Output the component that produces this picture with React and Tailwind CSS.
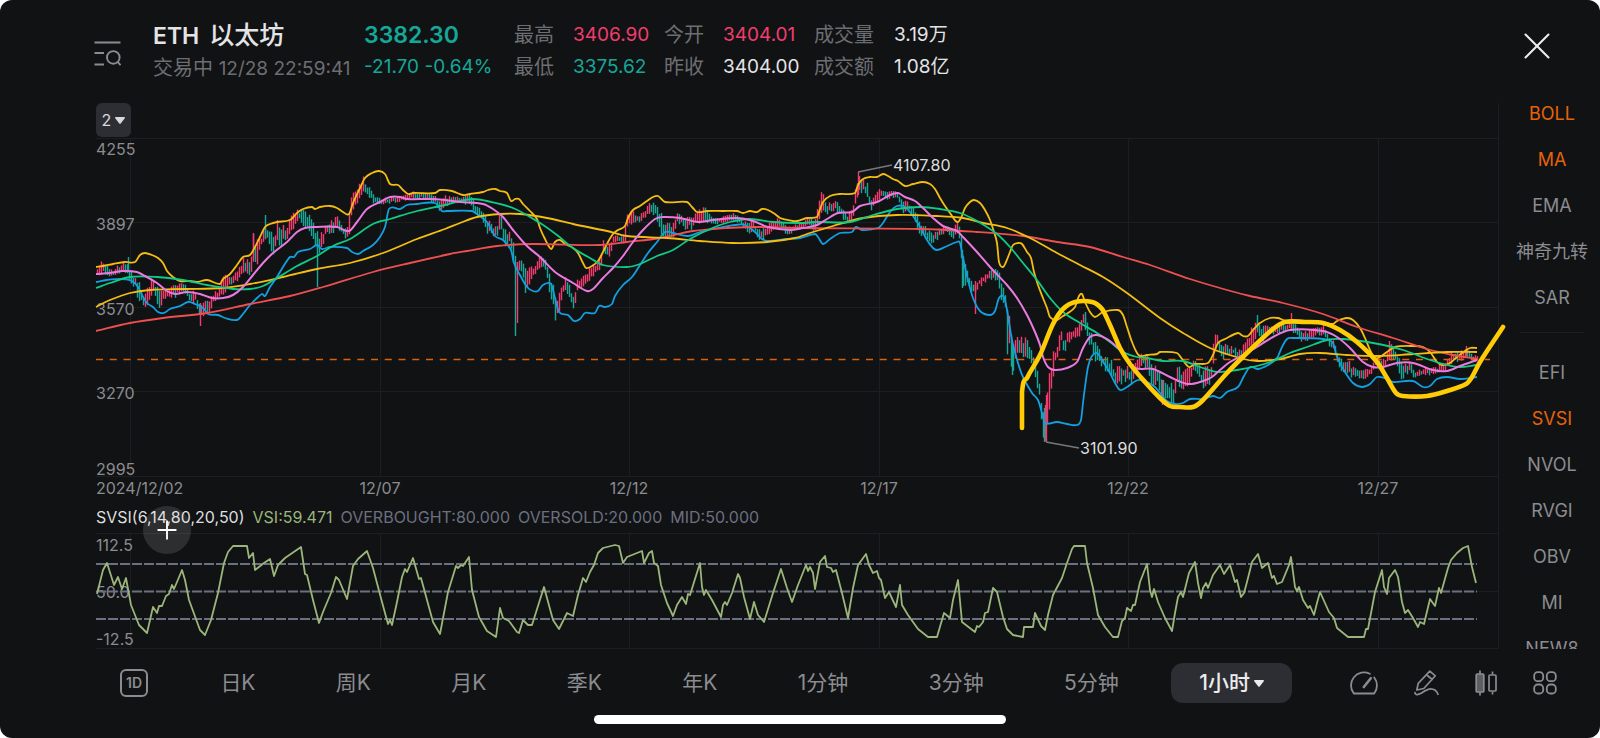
import { Plus, X } from "lucide-react";

const UP = "#f23c6e";
const DOWN = "#14a898";

const quotes = [
  [
    { label: "最高", value: "3406.90", color: "text-[#f23c6e]" },
    { label: "今开", value: "3404.01", color: "text-[#f23c6e]" },
    { label: "成交量", value: "3.19万", color: "text-[#e4e4e6]" },
  ],
  [
    { label: "最低", value: "3375.62", color: "text-[#14a898]" },
    { label: "昨收", value: "3404.00", color: "text-[#e4e4e6]" },
    { label: "成交额", value: "1.08亿", color: "text-[#e4e4e6]" },
  ],
];

const mainIndicators = ["BOLL", "MA", "EMA", "神奇九转", "SAR"];
const subIndicators = ["EFI", "SVSI", "NVOL", "RVGI", "OBV", "MI", "NEW8"];
const activeIndicators = ["BOLL", "MA", "SVSI"];

const periods = ["日K", "周K", "月K", "季K", "年K", "1分钟", "3分钟", "5分钟"];

const gridX = [130, 380, 629, 879, 1128, 1378];
const gridY = [138, 222, 307, 391, 476];
const priceLabels = [
  ["4255", 155],
  ["3897", 230],
  ["3570", 315],
  ["3270", 399],
  ["2995", 475],
];
const dateLabels = ["12/07", "12/12", "12/17", "12/22", "12/27"];

// x, y pairs
const bollUpper =
  "96,267 103,266 113,264 125,262 135,262 140,255 145,253 152,255 158,258 163,263 167,271 173,277 180,281 190,281 197,282 207,280 220,284 223,279 230,274 237,265 243,257 250,255 255,247 260,237 265,227 270,224 277,222 290,220 297,213 303,209 312,207 315,209 320,207 330,206 337,208 343,212 349,214 353,203 360,188 365,178 372,173 379,171 385,174 390,184 398,185 403,190 408,194 413,193 435,193 440,190 452,191 463,195 470,194 483,192 488,190 495,189 500,191 507,193 511,201 515,199 519,199 523,204 530,211 537,219 540,228 544,237 551,249 555,242 560,240 565,244 573,248 578,253 583,263 586,268 592,266 598,261 603,252 608,242 613,234 618,230 625,226 628,218 633,210 640,206 647,201 653,197 658,196 665,202 687,202 692,207 697,212 707,211 723,211 737,211 743,213 750,211 757,212 762,209 768,210 775,214 780,218 793,221 797,221 807,218 817,217 819,212 823,202 830,196 840,194 855,193 858,185 863,179 870,177 877,177 883,174 888,176 893,179 898,181 905,186 913,184 923,182 930,184 935,189 940,198 945,206 950,213 957,222 961,218 965,208 970,202 974,200 980,203 985,210 990,220 994,232 997,243 999,262 1003,267 1006,262 1010,252 1013,245 1018,243 1022,244 1027,252 1031,258 1034,272 1038,285 1043,298 1047,308 1050,317 1057,320 1063,316 1068,313 1075,307 1079,296 1082,294 1085,302 1090,312 1095,317 1103,312 1118,310 1123,315 1127,327 1132,342 1137,353 1140,356 1147,355 1157,354 1160,352 1177,353 1182,359 1189,367 1195,364 1208,363 1213,355 1218,343 1225,339 1238,333 1243,336 1248,336 1253,330 1260,323 1270,318 1278,318 1283,320 1290,321 1322,322 1333,324 1337,321 1347,318 1353,320 1360,328 1365,338 1370,350 1375,358 1380,357 1387,352 1395,347 1413,346 1423,347 1430,352 1437,362 1442,365 1450,363 1457,357 1465,351 1470,348 1477,348";

const bollLower =
  "96,282 107,280 123,279 132,281 138,287 142,295 147,303 153,307 158,312 164,313 170,309 180,306 188,302 195,304 203,308 208,314 218,315 225,318 237,320 243,314 250,305 257,298 262,294 265,296 270,287 277,277 283,267 290,257 294,257 298,252 310,249 317,245 322,249 330,247 347,248 352,252 358,254 363,251 373,245 380,237 385,227 389,209 400,209 407,205 417,204 435,203 442,211 447,211 472,211 478,215 487,222 495,236 503,240 511,250 514,263 520,275 527,287 533,291 538,291 543,285 551,284 555,298 559,312 568,315 574,321 580,319 585,313 595,313 599,306 605,307 612,304 615,296 623,285 632,277 640,265 648,253 657,242 665,232 673,233 688,236 700,232 723,227 735,225 745,225 755,232 762,239 768,241 787,239 800,238 815,234 818,237 823,244 830,239 840,233 852,232 856,227 862,230 878,228 883,223 890,212 897,206 905,207 913,216 920,227 927,240 933,248 937,250 945,247 957,242 960,243 963,258 968,280 973,298 980,311 990,315 995,311 999,298 1004,297 1007,310 1012,340 1018,363 1023,377 1032,393 1038,400 1042,413 1045,423 1057,422 1067,424 1077,425 1081,420 1083,403 1085,387 1088,367 1092,356 1097,353 1102,360 1110,373 1115,383 1120,390 1127,387 1138,380 1147,382 1155,387 1160,393 1167,401 1175,404 1183,403 1190,399 1203,399 1213,396 1220,398 1227,392 1238,387 1244,376 1250,367 1258,369 1268,365 1277,358 1282,347 1287,339 1292,338 1323,339 1333,343 1337,357 1345,372 1353,383 1362,387 1370,384 1377,377 1387,379 1393,382 1413,381 1423,387 1430,386 1437,379 1447,377 1460,379 1477,377";

const ma20 =
  "96,274 110,273 123,271 137,272 145,276 157,283 167,291 175,294 187,292 200,294 212,298 223,298 233,295 243,287 253,275 263,263 273,253 287,242 297,232 305,228 317,227 337,227 349,231 357,222 367,209 380,202 390,197 400,197 407,199 430,199 445,200 460,202 483,204 493,209 503,217 513,230 527,246 540,257 555,272 573,283 587,291 593,289 603,278 613,268 623,256 633,242 643,230 655,219 663,217 680,218 698,222 713,220 737,218 753,221 768,227 790,230 803,228 817,225 827,219 838,213 852,212 860,206 877,202 890,195 898,193 905,197 915,201 923,208 933,218 943,226 957,231 963,237 977,252 990,267 1007,285 1017,298 1027,315 1035,332 1040,345 1043,357 1048,367 1055,370 1067,368 1077,362 1083,348 1090,337 1097,335 1107,339 1118,348 1127,358 1135,368 1153,369 1170,377 1188,384 1203,381 1212,377 1220,370 1230,362 1243,355 1257,347 1273,337 1290,330 1323,331 1337,337 1350,348 1363,362 1373,367 1383,367 1397,363 1413,363 1433,370 1447,371 1460,366 1477,360";

const ma60 =
  "96,288 110,283 130,277 157,277 183,280 207,285 233,289 250,289 263,286 277,278 297,266 317,256 333,246 350,239 373,224 390,219 417,211 445,205 460,201 473,199 487,201 513,208 540,223 557,235 573,248 590,258 603,265 627,267 640,264 657,256 673,250 690,239 710,229 730,222 750,219 773,222 800,223 817,222 850,222 873,215 897,209 920,207 940,209 960,213 977,221 997,234 1010,247 1023,263 1037,280 1050,298 1063,312 1080,323 1097,333 1110,342 1123,352 1137,357 1147,358 1163,361 1183,361 1200,367 1217,372 1237,370 1257,366 1273,361 1290,353 1307,347 1327,340 1343,339 1373,343 1403,350 1427,359 1447,365 1460,367 1477,365";

const ma120 =
  "96,307 110,300 130,293 150,290 183,289 223,288 250,284 283,277 317,269 350,263 383,253 417,239 445,229 460,223 477,217 500,214 520,214 547,218 573,224 607,231 627,236 667,238 700,241 733,243 767,242 795,238 810,233 833,226 863,218 897,215 937,216 963,218 983,223 1007,228 1030,238 1057,253 1080,265 1103,277 1127,293 1160,318 1183,333 1210,348 1240,358 1257,361 1280,359 1300,354 1320,353 1347,355 1380,356 1413,354 1447,352 1477,352";

const ma250 =
  "96,331 130,323 163,318 207,313 250,304 290,296 323,287 373,272 410,263 450,254 467,251 497,246 533,244 600,245 627,242 660,238 693,231 727,228 760,227 800,228 923,229 977,232 1023,236 1057,242 1090,247 1123,257 1150,265 1190,279 1227,290 1250,296 1283,303 1323,314 1357,327 1393,338 1427,349 1453,355 1477,359";

const sketch =
  "1022,428 1022,392 1027,378 1040,355 1053,324 1063,309 1075,302 1092,302 1102,309 1110,325 1120,348 1130,364 1145,382 1160,398 1170,406 1180,407 1193,407 1202,401 1227,373 1250,350 1273,329 1285,322 1305,322 1323,323 1340,330 1357,342 1377,362 1387,378 1396,393 1403,396 1427,396 1447,391 1466,384 1472,377 1480,362 1503,327";

const svsi =
  "97,594 103,570 107,563 114,585 118,577 122,589 126,578 131,605 139,625 147,633 153,607 157,613 159,606 162,606 166,596 169,594 172,585 174,589 177,582 182,570 185,580 189,600 200,630 205,635 211,620 218,593 224,563 228,552 233,546 247,546 249,558 253,553 255,570 264,563 270,559 274,576 278,565 285,558 301,547 305,574 307,575 313,600 319,623 323,612 331,593 336,577 339,580 347,599 353,566 358,559 367,551 373,568 382,602 388,624 390,620 392,625 397,602 402,577 405,569 407,572 413,558 419,579 421,578 433,622 440,634 448,592 456,566 458,568 461,565 463,566 469,557 472,590 479,617 487,631 496,637 500,608 503,618 509,621 517,632 519,633 523,620 528,625 532,625 538,606 544,587 553,620 559,629 567,613 573,616 578,595 583,578 586,582 590,572 594,565 598,553 603,548 615,545 619,546 623,563 627,557 642,551 644,563 649,553 652,551 654,563 658,566 661,585 667,603 673,616 677,605 682,597 686,604 688,594 690,595 700,563 702,587 704,595 706,590 712,600 721,617 723,605 725,602 727,605 732,593 738,574 740,578 744,597 750,619 754,602 758,615 764,622 773,593 781,569 787,588 792,602 798,585 806,565 808,571 810,567 813,573 815,589 817,578 820,562 825,556 827,567 831,568 833,572 836,570 842,593 848,618 853,588 858,565 866,554 869,565 873,573 877,571 879,578 881,580 885,598 889,592 896,607 900,585 902,605 908,615 918,629 928,637 937,637 944,613 950,618 953,600 958,580 962,622 975,632 977,626 979,627 983,622 985,613 988,612 993,588 997,592 1003,617 1007,629 1013,635 1023,637 1024,627 1033,627 1035,613 1041,626 1045,630 1048,615 1053,595 1062,578 1067,563 1072,549 1074,546 1085,546 1087,563 1093,588 1098,615 1105,627 1113,637 1118,637 1122,621 1125,618 1127,608 1131,611 1133,605 1135,605 1140,582 1147,564 1150,590 1152,597 1154,589 1158,602 1165,618 1172,631 1175,613 1178,597 1181,592 1183,597 1189,573 1195,562 1198,583 1201,598 1203,588 1206,583 1208,588 1213,575 1220,565 1224,574 1230,565 1235,582 1237,580 1241,597 1244,593 1247,582 1252,562 1258,554 1262,568 1268,563 1272,578 1274,576 1277,584 1282,582 1289,565 1291,557 1295,587 1297,591 1299,587 1303,600 1308,608 1310,606 1314,615 1317,603 1320,592 1329,612 1334,618 1337,628 1348,637 1364,637 1366,629 1368,629 1375,592 1382,570 1384,587 1387,594 1389,578 1395,570 1398,577 1402,602 1405,613 1408,610 1413,618 1418,627 1420,622 1424,624 1430,599 1435,606 1439,588 1441,593 1448,568 1451,560 1457,553 1463,548 1468,546 1472,567 1476,583";

// x, high, low
const priceRange =
  "96,268,277 103,261,272 107,265,274 113,270,277 120,264,272 127,262,272 130,272,285 135,276,285 138,280,302 143,298,306 148,288,306 153,277,295 157,285,311 161,290,305 165,290,299 175,285,296 183,282,291 188,292,300 195,292,303 199,303,315 204,300,315 208,303,314 213,293,305 218,290,297 223,272,295 226,274,292 230,278,285 237,270,282 243,260,275 250,262,274 253,238,262 256,240,265 260,237,250 265,226,238 270,230,247 274,240,255 277,222,245 282,225,243 287,228,240 290,215,233 297,211,220 303,209,225 307,215,228 312,220,238 317,233,250 322,235,253 325,225,235 331,220,233 337,218,228 342,227,236 348,228,240 350,200,225 352,190,210 355,190,205 360,182,195 363,178,190 367,185,195 372,192,202 377,197,205 385,198,204 392,197,203 400,196,201 405,194,200 413,192,198 425,193,199 435,197,203 440,203,214 445,197,207 450,197,203 460,196,204 469,195,203 475,203,215 482,210,220 487,220,232 493,227,237 497,225,235 500,212,227 504,230,245 510,232,243 513,245,265 517,262,278 520,252,272 526,272,293 531,268,280 537,260,270 543,255,265 548,268,282 552,275,310 555,295,318 558,300,321 561,285,300 565,278,290 570,287,300 574,297,310 577,280,290 582,278,286 587,272,285 593,265,275 600,258,268 603,242,255 608,245,258 613,235,245 620,235,242 625,228,245 628,210,225 633,213,222 640,215,222 645,210,218 650,201,213 655,203,215 660,210,230 663,220,238 668,225,237 673,222,235 677,212,222 685,217,228 692,217,228 697,212,222 702,207,225 708,212,222 717,219,224 727,215,221 735,213,220 742,220,227 748,223,235 753,220,228 758,230,240 765,227,238 772,222,230 780,218,227 787,227,237 793,225,230 800,223,230 808,218,225 815,220,232 818,200,220 822,192,207 827,203,214 835,202,210 842,207,217 848,215,225 853,203,218 856,180,207 858,175,195 862,178,190 867,185,200 871,200,210 876,190,200 882,190,198 890,190,199 898,192,200 902,197,216 907,201,210 913,207,217 917,215,234 922,223,236 927,230,240 933,235,245 938,228,237 945,225,232 952,230,240 957,222,233 960,222,250 963,250,285 967,272,283 971,282,293 975,283,295 978,278,287 985,274,282 992,268,278 998,270,282 1001,285,303 1005,292,305 1007,305,353 1010,318,358 1013,345,368 1016,337,350 1020,338,355 1025,336,360 1030,348,360 1034,360,373 1037,370,388 1040,390,405 1042,405,430 1044,425,441 1046,395,440 1049,375,405 1053,350,375 1058,340,355 1061,327,345 1064,340,355 1068,330,342 1074,330,338 1079,325,337 1083,314,327 1085,314,330 1088,325,340 1092,338,350 1097,347,365 1103,357,367 1110,360,375 1115,370,385 1120,365,382 1125,365,380 1130,370,383 1137,360,375 1141,352,365 1148,357,370 1150,362,383 1158,372,385 1162,378,400 1168,385,400 1173,385,403 1177,365,382 1183,372,392 1188,370,385 1194,360,370 1198,365,378 1202,372,391 1205,362,388 1210,370,385 1214,338,360 1217,336,345 1222,347,362 1227,345,355 1233,348,355 1240,350,360 1247,340,355 1252,322,345 1257,320,332 1262,327,342 1267,325,336 1275,325,333 1283,323,332 1291,322,330 1296,325,335 1303,332,342 1310,330,338 1317,328,335 1323,326,335 1329,338,346 1334,342,352 1338,355,367 1345,360,373 1352,365,378 1360,370,378 1368,370,378 1375,358,368 1380,358,368 1385,357,368 1389,345,360 1393,347,360 1398,352,370 1402,367,380 1408,362,372 1415,370,378 1425,368,376 1437,367,373 1445,362,370 1452,352,362 1460,352,360 1466,349,357 1472,354,361 1477,357,362";

// long wicks that stand out of the range
const wicks = [
  [128, 257, 272, DOWN],
  [200, 303, 326, UP],
  [265, 215, 238, DOWN],
  [253, 233, 258, UP],
  [317, 237, 287, DOWN],
  [515, 262, 336, DOWN],
  [517, 262, 323, UP],
  [858, 172, 195, UP],
  [975, 285, 314, UP],
  [962, 250, 288, DOWN],
  [1012, 345, 375, DOWN],
  [1044, 408, 442, DOWN],
  [1046, 395, 442, UP],
  [1085, 312, 330, DOWN],
  [1162, 380, 405, UP],
  [1257, 315, 330, DOWN],
  [1291, 313, 331, UP],
  [1389, 341, 360, UP],
  [1466, 346, 356, UP],
];

const parse = (text) => text.split(" ").map((p) => p.split(",").map(Number));

function smoothPath(text) {
  const pts = parse(text);
  let d = `M${pts[0][0]} ${pts[0][1]}`;
  for (let i = 0; i < pts.length - 1; i++) {
    const p0 = pts[i - 1] || pts[i];
    const p1 = pts[i];
    const p2 = pts[i + 1];
    const p3 = pts[i + 2] || p2;
    // one third of each step keeps the curve from overshooting in x
    const dx = (p2[0] - p1[0]) / 3;
    const s1 = (p2[1] - p0[1]) / (p2[0] - p0[0] || 1);
    const s2 = (p3[1] - p1[1]) / (p3[0] - p1[0] || 1);
    d += `C${p1[0] + dx} ${p1[1] + s1 * dx} ${p2[0] - dx} ${p2[1] - s2 * dx} ${p2[0]} ${p2[1]}`;
  }
  return d;
}

function buildCandles() {
  const range = parse(priceRange);
  const candles = [];
  let k = 0;
  let prevMid = 272;
  for (let x = 97; x <= 1477; x += 2) {
    while (k < range.length - 2 && range[k + 1][0] < x) k++;
    const [x0, h0, l0] = range[k];
    const [x1, h1, l1] = range[k + 1];
    const t = (x - x0) / (x1 - x0);
    const size = l0 + (l1 - l0) * t - (h0 + (h1 - h0) * t);
    const n1 = Math.abs(Math.sin(x * 12.9898) * 43758.5453) % 1;
    const n2 = Math.abs(Math.sin(x * 78.233) * 12543.123) % 1;
    const high = h0 + (h1 - h0) * t + (n1 - 0.35) * size * 0.5;
    const low = l0 + (l1 - l0) * t - (n2 - 0.35) * size * 0.5;
    const mid = (high + low) / 2;
    candles.push([x, high, low, mid <= prevMid ? UP : DOWN]);
    prevMid = mid;
  }
  return candles;
}

const candles = [...buildCandles(), ...wicks];

function PriceChart() {
  return (
    <svg
      viewBox="96 137 1402 363"
      className="relative block w-full overflow-visible"
      role="img"
      aria-label="ETH price chart"
    >
      <g stroke="#1d1e21">
        {gridY.map((y) => (
          <line key={y} x1="96" x2="1498" y1={y + 0.5} y2={y + 0.5} />
        ))}
        {gridX.map((x) => (
          <line key={x} x1={x + 0.5} x2={x + 0.5} y1="138" y2="476" />
        ))}
      </g>
      <g fill="#8b8c90" className="text-[16px]">
        {priceLabels.map(([label, y]) => (
          <text key={label} x="96" y={y}>
            {label}
          </text>
        ))}
        <text x="96" y="494">
          2024/12/02
        </text>
        {dateLabels.map((label, i) => (
          <text key={label} x={gridX[i + 1]} y="494" textAnchor="middle">
            {label}
          </text>
        ))}
      </g>
      <g strokeWidth="1.4">
        {candles.map(([x, high, low, color], i) => (
          <line key={i} x1={x + 0.5} x2={x + 0.5} y1={high} y2={low} stroke={color} />
        ))}
      </g>
      <line x1="96" x2="1490" y1="359.5" y2="359.5" stroke="#d9620f" strokeWidth="1.5" strokeDasharray="7 6.75" />
      <g fill="none" strokeWidth="1.8" strokeLinejoin="round">
        <path d={smoothPath(bollLower)} stroke="#139fe0" />
        <path d={smoothPath(bollUpper)} stroke="#f3bd12" />
        <path d={smoothPath(ma250)} stroke="#ee4f51" />
        <path d={smoothPath(ma120)} stroke="#f3bd12" />
        <path d={smoothPath(ma60)} stroke="#0fcb85" />
        <path d={smoothPath(ma20)} stroke="#e97be0" strokeWidth="2" />
      </g>
      <path
        d={smoothPath(sketch)}
        fill="none"
        stroke="#ffcc05"
        strokeWidth="4.6"
        strokeLinecap="round"
        strokeLinejoin="round"
      />
      <g stroke="#77787c" strokeWidth="1.5">
        <line x1="858" y1="172" x2="892" y2="165" />
        <line x1="1046" y1="442" x2="1079" y2="448" />
      </g>
      <g fill="#dededf" className="text-[16px]">
        <text x="893" y="171">
          4107.80
        </text>
        <text x="1080" y="454">
          3101.90
        </text>
      </g>
    </svg>
  );
}

function SvsiChart() {
  return (
    <svg viewBox="96 533 1402 116" className="block w-full" role="img" aria-label="SVSI chart">
      <g stroke="#1d1e21">
        {[533, 591, 648].map((y) => (
          <line key={y} x1="96" x2="1498" y1={y + 0.5} y2={y + 0.5} />
        ))}
        {gridX.map((x) => (
          <line key={x} x1={x + 0.5} x2={x + 0.5} y1="534" y2="648" />
        ))}
      </g>
      <g fill="#8b8c90" className="text-[16px]">
        <text x="96" y="551">
          112.5
        </text>
        <text x="96" y="598">
          50.0
        </text>
        <text x="96" y="645">
          -12.5
        </text>
      </g>
      <g stroke="#6a7080" strokeWidth="1.8" strokeDasharray="10 2">
        <line x1="96" x2="1477" y1="564" y2="564" />
        <line x1="96" x2="1477" y1="591.5" y2="591.5" />
        <line x1="96" x2="1477" y1="619" y2="619" />
      </g>
      <polyline points={svsi} fill="none" stroke="#9bb57b" strokeWidth="1.8" strokeLinejoin="round" />
    </svg>
  );
}

function IndicatorList({ items }) {
  return (
    <ul className="flex flex-col items-center gap-[26px]">
      {items.map((name) => (
        <li key={name} className="flex h-5">
          <button
            type="button"
            className={`text-[18px] leading-5 whitespace-nowrap ${
              activeIndicators.includes(name) ? "text-[#e6620a]" : "text-[#8b8c90]"
            }`}
          >
            {name}
          </button>
        </li>
      ))}
    </ul>
  );
}

function Caret({ className }) {
  return (
    <svg viewBox="0 0 10 7" className={className} fill="currentColor" aria-hidden="true">
      <path d="M0.8 0h8.4a.8.8 0 0 1 .6 1.3L5.7 6.5a.9.9 0 0 1-1.4 0L.2 1.3A.8.8 0 0 1 .8 0z" />
    </svg>
  );
}

export default function App() {
  return (
    <div className="min-h-screen bg-white">
      <div className="flex min-h-screen flex-col overflow-hidden rounded-xl bg-[#111214] font-['Inter','Noto_Sans_CJK_SC',sans-serif]">
        <header className="flex h-[103px] items-start pt-[19px] pr-12 pl-[94px]">
          <button type="button" aria-label="Search list" className="mt-[21px] mr-8 text-[#8b8c90]">
            <svg viewBox="0 0 27 27" className="size-[27px]" fill="none" stroke="currentColor" strokeWidth="1.9">
              <path d="M0.5 2.5h26M0.5 13h9.5M0.5 24.5h9.5" />
              <circle cx="19.3" cy="17.4" r="6.3" />
              <path d="M23.6 21.9l3 3.2" />
            </svg>
          </button>
          <div className="w-[211px] shrink-0">
            <h1 className="text-[25px] leading-8 font-medium whitespace-nowrap text-[#e4e4e6]">
              <span className="text-[23px] font-semibold">ETH</span>
              <span className="ml-[10px]">以太坊</span>
            </h1>
            <p className="text-[20px] leading-8 whitespace-nowrap text-[#6d6e72]">
              交易中 <span className="text-[19px]">12/28 22:59:41</span>
            </p>
          </div>
          <div className="w-[150px] shrink-0 whitespace-nowrap text-[#14a898]">
            <p className="text-[23px] leading-8 font-semibold">3382.30</p>
            <p className="text-[19px] leading-8">-21.70 -0.64%</p>
          </div>
          <dl>
            {quotes.map((row, i) => (
              <div key={i} className="grid grid-cols-[150px_150px_auto] text-[20px] leading-8">
                {row.map(({ label, value, color }) => (
                  <div key={label} className="flex whitespace-nowrap">
                    <dt className={`text-[#6d6e72] ${label.length > 2 ? "w-20" : "w-[59px]"}`}>{label}</dt>
                    <dd className={`text-[19px] ${color}`}>{value}</dd>
                  </div>
                ))}
              </div>
            ))}
          </dl>
          <button type="button" aria-label="Close" className="mt-1 ml-auto text-[#ececee]">
            <X className="-mr-2 size-[46px]" strokeWidth={1.1} />
          </button>
        </header>

        <main className="flex pl-24">
          <section className="min-w-0 flex-1">
            <button
              type="button"
              aria-label="Chart count 2"
              className="flex h-[34px] w-[35px] items-center justify-center gap-1 rounded-md bg-[#2c2e34] text-[16px] text-[#d9d9db]"
            >
              2
              <Caret className="w-[10px]" />
            </button>
            <PriceChart />
            <div className="relative flex h-[33px] items-center gap-2 text-[16px] whitespace-nowrap text-[#6a7080]">
              <span className="text-[#dededf]">SVSI(6,14,80,20,50)</span>
              <span className="text-[#9bb57b]">VSI:59.471</span>
              <span>OVERBOUGHT:80.000</span>
              <span>OVERSOLD:20.000</span>
              <span>MID:50.000</span>
              <button
                type="button"
                aria-label="Add indicator"
                className="absolute top-[6px] left-[47px] flex size-12 items-center justify-center rounded-full bg-white/12 text-white"
              >
                <Plus className="size-[30px]" strokeWidth={1.5} />
              </button>
            </div>
            <SvsiChart />
          </section>
          <aside className="w-[102px] overflow-hidden border-l border-[#1d1e21] pt-px pl-[5px] [contain:size]">
            <IndicatorList items={mainIndicators} />
            <hr className="mx-4 mt-6 mb-[30px] border-[#1d1e21]" />
            <IndicatorList items={subIndicators} />
          </aside>
        </main>

        <footer className="pt-[14px] pb-[13px]">
          <div className="flex items-center pr-[43px] pl-[92px]">
            <nav className="flex flex-1 items-center justify-between text-[21px] leading-10 whitespace-nowrap text-[#8b8c90]">
              <button type="button" className="pr-5 pl-7">
                <span className="flex size-7 items-center justify-center rounded-md border-2 border-[#8b8c90] text-[14px] font-semibold">
                  1D
                </span>
              </button>
              {periods.map((name) => (
                <button key={name} type="button" className="px-7">
                  {name}
                </button>
              ))}
              <button
                type="button"
                className="flex items-center gap-1 rounded-xl bg-[#2c2e34] px-7 font-medium text-[#ececee]"
              >
                1小时
                <Caret className="w-[10px]" />
              </button>
            </nav>
            <div className="ml-[58px] flex items-center gap-9 text-[#8b8c90]">
              <button type="button" aria-label="Speed">
                <svg viewBox="0 0 28 24" className="h-6 w-7" fill="none" stroke="currentColor" strokeWidth="1.8" strokeLinecap="round" strokeLinejoin="round">
                  <path d="M19.8 2.8A13 13 0 0 0 3.8 22.5h20.400A13 13 0 0 0 24.200 6.500" />
                  <path d="M20.8 7.2l-7 8.800" strokeWidth="2.6" />
                </svg>
              </button>
              <button type="button" aria-label="Draw">
                <svg viewBox="0 0 25 26" className="h-[26px] w-[25px]" fill="none" stroke="currentColor" strokeWidth="1.7" strokeLinecap="round" strokeLinejoin="round">
                  <path d="M15.8 1.2l5.5 4.6-11.5 12.7-7 1.5 1.4-6.7zM12.8 5l5.4 4.5" />
                  <path d="M1 22.5c-.3 2.5 3 2.7 6 .8 4-2.6 6.500-4.500 9.500-4.500 3.500 0 6.500 2.500 7.500 5.500" />
                </svg>
              </button>
              <button type="button" aria-label="Chart type">
                <svg viewBox="0 0 22 26" className="h-[26px] w-[22px]" stroke="currentColor" strokeWidth="1.7">
                  <path d="M5 0.5v25M17.500 1.500v3M17.500 21.500v3" />
                  <rect x="1.2" y="4" width="7.6" height="18" rx="1" fill="#5d5e62" />
                  <rect x="14" y="5" width="7" height="16" rx="1" fill="none" />
                </svg>
              </button>
              <button type="button" aria-label="More">
                <svg viewBox="0 0 24 24" className="size-6" fill="none" stroke="currentColor" strokeWidth="1.8">
                  <rect x="1.2" y="1.2" width="9" height="9" rx="3.5" />
                  <rect x="13.8" y="1.2" width="9" height="9" rx="3.5" />
                  <rect x="1.2" y="13.5" width="9" height="9" rx="3.5" />
                  <rect x="13.8" y="13.5" width="9" height="9" rx="3.5" />
                </svg>
              </button>
            </div>
          </div>
          <div className="mx-auto mt-3 h-[9px] w-[412px] rounded-full bg-white" />
        </footer>
      </div>
    </div>
  );
}
